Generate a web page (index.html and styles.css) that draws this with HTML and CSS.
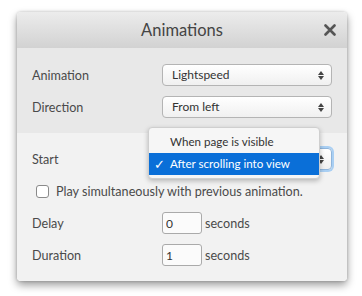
FILE: index.html
```html
<!DOCTYPE html>
<html lang="en">

<head>
  <meta charset="UTF-8">
  <meta name="viewport" content="width=device-width, initial-scale=1.0">
  <title>Animations</title>
  <link rel="stylesheet" href="styles.css">
</head>

<body>
  <div class="dialog">
    <div class="header">
      <h2>Animations</h2>
      <span class="close">
        <svg width="12" height="12" viewBox="0 0 12 12"><path d="M1.5 1.5 L10.5 10.5 M10.5 1.5 L1.5 10.5" stroke="#555" stroke-width="2.6" stroke-linecap="round"/></svg>
      </span>
    </div>

    <div class="section top">
      <div class="row">
        <label>Animation</label>
        <div class="select">Lightspeed<span class="arrows"></span></div>
      </div>
      <div class="row">
        <label>Direction</label>
        <div class="select">From left<span class="arrows"></span></div>
      </div>
    </div>

    <div class="section bottom">
      <div class="row start">
        <label>Start</label>
        <div class="select focus"><span class="arrows"></span></div>
        <ul class="menu">
          <li>When page is visible</li>
          <li class="active"><span class="tick">✓</span>After scrolling into view</li>
        </ul>
      </div>
      <div class="check">
        <span class="box"></span>
        Play simultaneously with previous animation.
      </div>
      <div class="row">
        <label>Delay</label>
        <input type="text" value="0"><span class="unit">seconds</span>
      </div>
      <div class="row">
        <label>Duration</label>
        <input type="text" value="1"><span class="unit">seconds</span>
      </div>
    </div>
  </div>
</body>

</html>
```

FILE: styles.css
```css
html {
  min-height: 296px;
  background: #fff;
}

body {
  margin: 0;
  padding: 12px 15px 15px 17px;
  background: #fff;
  font-family: Lato, "Open Sans", sans-serif;
  font-size: 12.6px;
  color: #4a4a4a;
}

.dialog {
  width: 330px;
  border-radius: 4px;
  box-shadow: 0 4px 9px rgba(0, 0, 0, 0.4), 0 0 3px rgba(0, 0, 0, 0.2);
}

.header {
  position: relative;
  height: 36px;
  display: flex;
  align-items: center;
  justify-content: center;
  background: linear-gradient(#ececec, #d2d2d2);
  border-radius: 4px 4px 0 0;
}

h2 {
  margin: 0;
  font-size: 16.5px;
  font-weight: normal;
  color: #444;
}

.close {
  position: absolute;
  right: 11px;
  top: 12px;
  line-height: 0;
}

.section {
  padding: 16px 15px 15px;
}

.top {
  background: #e8e8e8;
}

.bottom {
  background: #f2f2f2;
  padding-top: 15px;
  border-radius: 0 0 4px 4px;
}

.row {
  display: flex;
  align-items: center;
  height: 22px;
  margin-bottom: 10px;
}

.row:last-child {
  margin-bottom: 0;
}

.row label {
  width: 130px;
}

.select {
  position: relative;
  width: 170px;
  height: 22px;
  box-sizing: border-box;
  border: 1px solid #b4b4b4;
  border-radius: 4px;
  background: linear-gradient(#fff, #f0f0f0);
  padding-left: 9px;
  line-height: 20px;
  font-size: 12px;
  color: #333;
}

.arrows {
  position: absolute;
  right: 6px;
  top: 6px;
  width: 7px;
  height: 9px;
}

.arrows::before,
.arrows::after {
  content: "";
  position: absolute;
  left: 0;
  border-left: 3.5px solid transparent;
  border-right: 3.5px solid transparent;
}

.arrows::before {
  top: 0;
  border-bottom: 4px solid #444;
}

.arrows::after {
  bottom: 0;
  border-top: 4px solid #444;
}

.focus {
  box-shadow: 0 0 0 2px #a9cff3;
  border-color: #8fb5dc;
}

.start {
  position: relative;
}

.menu {
  position: absolute;
  left: 116px;
  top: -21px;
  width: 170px;
  margin: 0;
  padding: 3px 0;
  list-style: none;
  background: #f6f6f6;
  border: 1px solid #cfcfcf;
  border-radius: 4px;
  box-shadow: 0 2px 5px rgba(0, 0, 0, 0.25);
  font-size: 11.6px;
  color: #333;
}

.menu li {
  position: relative;
  height: 22px;
  line-height: 22px;
  padding-left: 21px;
}

.menu .active {
  background: #0a6fd8;
  color: #fff;
}

.tick {
  position: absolute;
  left: 5px;
  font-size: 13px;
}

.check {
  display: flex;
  align-items: center;
  height: 22px;
  margin-bottom: 10px;
  padding-left: 4px;
}

.box {
  width: 11px;
  height: 11px;
  border: 1px solid #8a8a8a;
  border-radius: 3px;
  background: #fff;
  margin-right: 7px;
}

input[type="text"] {
  width: 40px;
  height: 22px;
  box-sizing: border-box;
  margin: 0;
  border: 1px solid #aaa;
  border-radius: 3px;
  padding: 0 3px;
  font-family: inherit;
  font-size: 12px;
  color: #333;
  background: #fbfbfb;
}

.unit {
  margin-left: 3px;
}
```
